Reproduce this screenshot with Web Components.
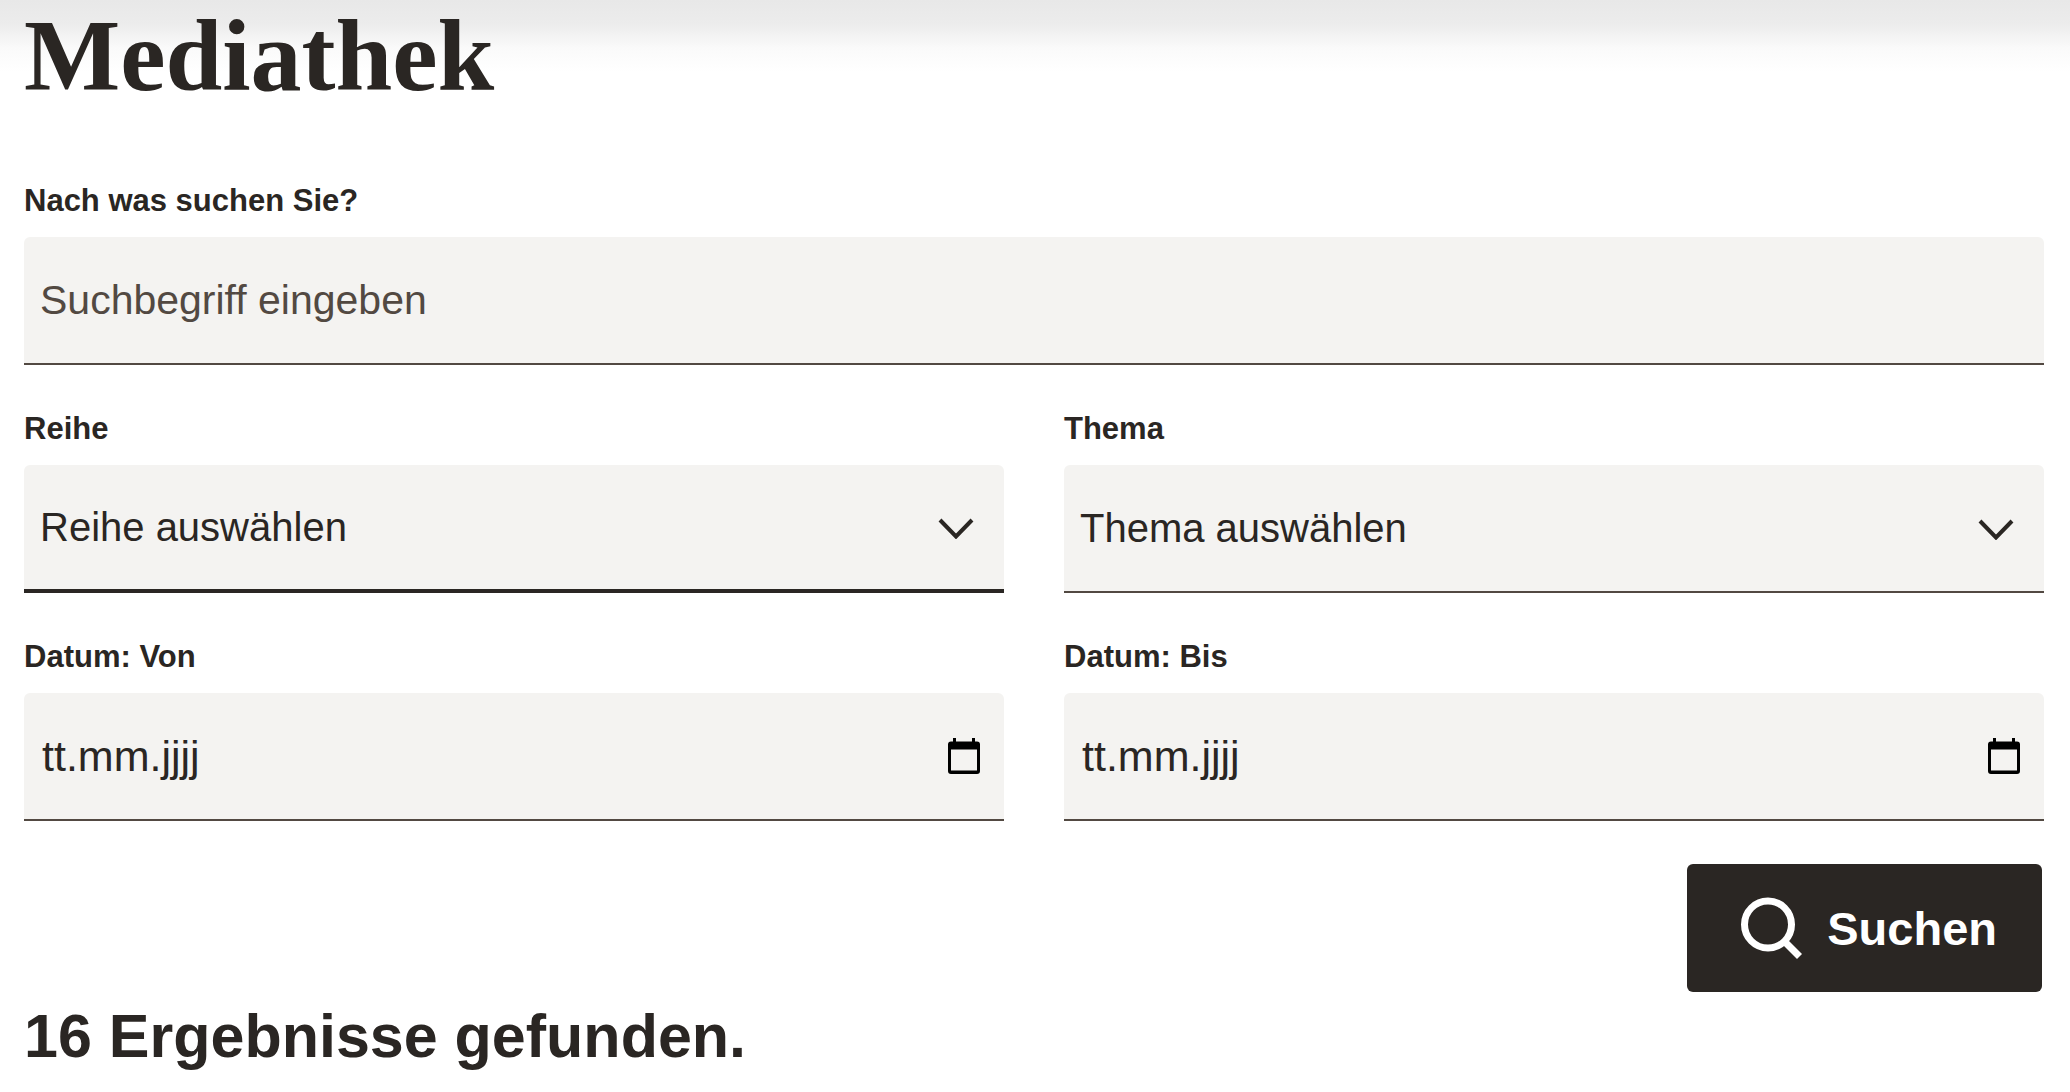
<!DOCTYPE html>
<html lang="de">
<head>
<meta charset="utf-8">
<meta name="viewport" content="width=device-width, initial-scale=1">
<title>Mediathek</title>
<style>
  :root {
    --ink: #2a2623;
    --muted: #524942;
    --surface: #f4f3f1;
  }
  body {
    margin: 0;
    background: #fff linear-gradient(#e8e8e8, #ececec 24px, #fafafa 48px, #fff 72px) no-repeat;
    color: var(--ink);
    font-family: "Liberation Sans", Arial, sans-serif;
  }
</style>
</head>
<body>
<media-library>
  <span slot="title">Mediathek</span>
  <search-form slot="form">
    <text-field class="wide" label="Nach was suchen Sie?" placeholder="Suchbegriff eingeben"></text-field>
    <select-field label="Reihe" prompt="Reihe auswählen" active></select-field>
    <select-field label="Thema" prompt="Thema auswählen"></select-field>
    <date-field label="Datum: Von"></date-field>
    <date-field label="Datum: Bis"></date-field>
    <search-button slot="actions">Suchen</search-button>
  </search-form>
  <span slot="results">16 Ergebnisse gefunden.</span>
</media-library>

<script>
  const fieldStyles = `
    :host { display: block; min-width: 0; }
    label { display: block; margin-bottom: 16px; font-size: 31px; line-height: 40px; font-weight: 700; }
    .box {
      display: flex; align-items: stretch; box-sizing: border-box; height: 128px;
      background: var(--surface); border-bottom: 2px solid var(--muted);
      border-radius: 6px 6px 0 0; overflow: hidden;
    }
    :host([active]) .box { border-bottom: 4px solid var(--ink); }
    input, select {
      flex: 1; min-width: 0; width: 100%; margin: 0; padding: 0 16px; border: 0; outline: 0;
      background: none; color: var(--ink); font: inherit; font-size: 41px; border-radius: 0;
    }
    input::placeholder { color: var(--muted); opacity: 1; }
  `;

  class MediaLibrary extends HTMLElement {
    constructor() {
      super();
      this.attachShadow({ mode: "open" }).innerHTML = `
        <style>
          :host { display: block; }
          main { padding: 0 26px 16px 24px; }
          h1 { margin: 0 0 69px; font: 700 102px/112px "Liberation Serif", "Times New Roman", serif; }
          h2 { margin: 8px 0 0; font-size: 61px; line-height: 72px; font-weight: 700; }
        </style>
        <main>
          <h1><slot name="title"></slot></h1>
          <slot name="form"></slot>
          <h2><slot name="results"></slot></h2>
        </main>`;
    }
  }

  class SearchForm extends HTMLElement {
    constructor() {
      super();
      this.attachShadow({ mode: "open" }).innerHTML = `
        <style>
          :host { display: block; }
          .fields { display: grid; grid-template-columns: 1fr 1fr; gap: 44px 60px; }
          ::slotted(.wide) { grid-column: 1 / -1; }
          .actions { display: flex; justify-content: flex-end; margin-top: 43px; padding-right: 2px; }
        </style>
        <form>
          <div class="fields"><slot></slot></div>
          <div class="actions"><slot name="actions"></slot></div>
        </form>`;
    }
  }

  class TextField extends HTMLElement {
    constructor() {
      super();
      this.attachShadow({ mode: "open" }).innerHTML = `
        <style>${fieldStyles}</style>
        <label for="control"></label>
        <div class="box"><input id="control" type="text"></div>`;
    }
    connectedCallback() {
      this.shadowRoot.querySelector("label").textContent = this.getAttribute("label");
      this.shadowRoot.querySelector("input").placeholder = this.getAttribute("placeholder");
    }
  }

  class SelectField extends HTMLElement {
    constructor() {
      super();
      this.attachShadow({ mode: "open" }).innerHTML = `
        <style>${fieldStyles}
          .box { display: grid; align-items: center; }
          select, svg { grid-area: 1 / 1; }
          select { appearance: none; height: 100%; padding-right: 80px; font-size: 40px; }
          svg { justify-self: end; margin-right: 30px; pointer-events: none; }
        </style>
        <label for="control"></label>
        <div class="box">
          <select id="control"><option></option></select>
          <svg width="36" height="24" viewBox="0 0 36 24" fill="none" stroke="#2a2623" stroke-width="4" aria-hidden="true"><path d="M2 5 18 21.500 34 5"/></svg>
        </div>`;
    }
    connectedCallback() {
      this.shadowRoot.querySelector("label").textContent = this.getAttribute("label");
      this.shadowRoot.querySelector("option").textContent = this.getAttribute("prompt");
    }
  }

  class DateField extends HTMLElement {
    constructor() {
      super();
      this.attachShadow({ mode: "open" }).innerHTML = `
        <style>${fieldStyles}
          input { font-size: 43px; padding-left: 18px; }
          input::placeholder { color: var(--ink); }
          button { display: flex; align-items: center; padding: 0 24px 0 8px; border: 0; background: none; cursor: pointer; }
        </style>
        <label for="control"></label>
        <div class="box">
          <input id="control" type="text" inputmode="numeric" placeholder="tt.mm.jjjj">
          <button type="button" aria-label="Kalender öffnen">
            <svg width="32" height="36" viewBox="0 0 32 36" aria-hidden="true"><path fill="#000" fill-rule="evenodd" d="M5 0h3v3.500h16V0h3v3.500h2a3 3 0 0 1 3 3V33a3 3 0 0 1-3 3H3a3 3 0 0 1-3-3V6.500a3 3 0 0 1 3-3h2ZM3 11.500V32.500h26V11.500Z"/></svg>
          </button>
        </div>`;
    }
    connectedCallback() {
      this.shadowRoot.querySelector("label").textContent = this.getAttribute("label");
    }
  }

  class SearchButton extends HTMLElement {
    constructor() {
      super();
      this.attachShadow({ mode: "open" }).innerHTML = `
        <style>
          :host { display: block; }
          button {
            display: flex; align-items: center; gap: 20px; height: 128px; padding: 0 45px 0 48px;
            border: 0; border-radius: 6px; background: var(--ink); color: #fff;
            font: inherit; font-size: 47px; font-weight: 700; cursor: pointer;
          }
        </style>
        <button type="submit">
          <svg width="72" height="72" viewBox="0 0 72 72" fill="none" stroke="#fff" stroke-width="7" aria-hidden="true"><circle cx="33" cy="32.500" r="23.500"/><path d="m48.500 48.500 16 16"/></svg>
          <span><slot></slot></span>
        </button>`;
    }
  }

  customElements.define("media-library", MediaLibrary);
  customElements.define("search-form", SearchForm);
  customElements.define("text-field", TextField);
  customElements.define("select-field", SelectField);
  customElements.define("date-field", DateField);
  customElements.define("search-button", SearchButton);
</script>
</body>
</html>
